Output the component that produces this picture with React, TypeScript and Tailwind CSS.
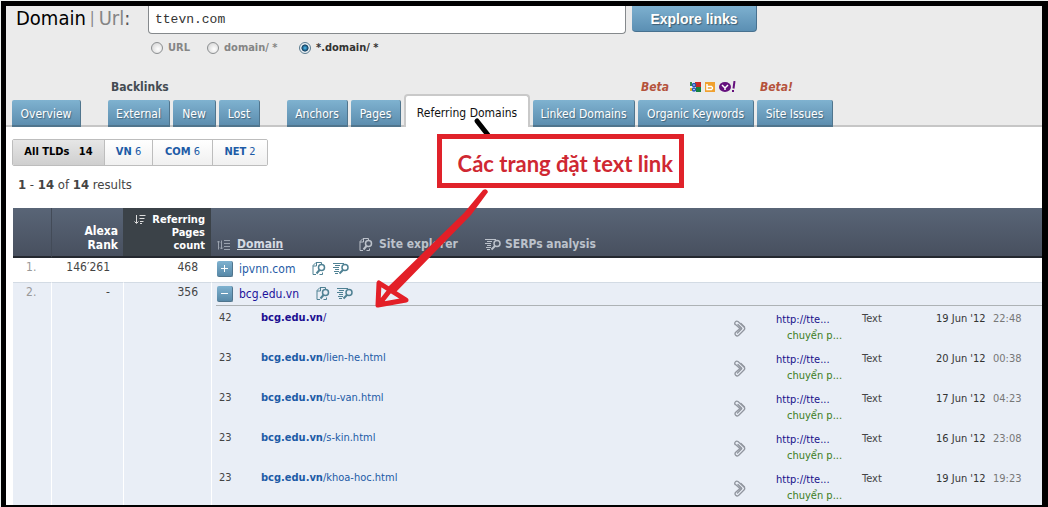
import type { ReactNode } from "react";

type Tab = { name: string; width: string; active?: boolean };

const pages = [
  { count: 42, path: "/", date: "19 Jun '12", time: "22:48", visited: true },
  { count: 23, path: "/lien-he.html", date: "20 Jun '12", time: "00:38" },
  { count: 23, path: "/tu-van.html", date: "17 Jun '12", time: "04:23" },
  { count: 23, path: "/s-kin.html", date: "16 Jun '12", time: "23:08" },
  { count: 23, path: "/khoa-hoc.html", date: "19 Jun '12", time: "19:23" },
];

const filters = [
  { tld: "VN", count: 6, width: "w-12" },
  { tld: "COM", count: 6, width: "w-[60px]" },
  { tld: "NET", count: 2, width: "w-[55px]" },
];

export default function App() {
  return (
    <div className="h-screen bg-[#eef2f1] pt-px pl-px font-['DejaVu_Sans_Condensed','DejaVu_Sans',sans-serif] text-[#333]">
      <div className="relative h-full overflow-hidden border-t-5 border-r-6 border-b-2 border-l-5 border-black bg-white">
        <SearchHeader />
        <Results />
        <Annotation />
      </div>
    </div>
  );
}

function SearchHeader() {
  return (
    <header className="border-b-2 border-[#c6c6c6] bg-[#ebebeb]">
      <form className="flex items-start" onSubmit={(e) => e.preventDefault()}>
        <label htmlFor="domain" className="flex w-[142px] items-center gap-1 pl-[10px] text-xl leading-6 text-black">
          Domain
          <span className="text-base leading-6 text-[#858585]">|</span>
          <span className="text-[#858585]">
            Url<span className="text-[#555]">:</span>
          </span>
        </label>
        <div>
          <div className="flex gap-1.5">
            <input
              id="domain"
              defaultValue="ttevn.com"
              className="h-7 w-[478px] rounded-b-sm border border-t-0 border-[#85898c] bg-white px-1.5 font-['Liberation_Mono',monospace] text-[13px] text-[#333]"
            />
            <button className="h-[26px] w-[125px] rounded-b-sm border-r border-b border-[#47718f] bg-linear-to-b from-[#7db0cf] to-[#5b8fb3] font-['Liberation_Sans',sans-serif] text-sm font-bold text-white text-shadow-[1px_1px_1px_#0006]">
              Explore links
            </button>
          </div>
          <div className="mt-1.5 flex h-4 items-center text-[11px] font-bold text-[#858585]">
            <Scope name="URL" className="w-14" />
            <Scope name="domain/ *" className="w-[92px]" />
            <Scope name="*.domain/ *" checked />
          </div>
        </div>
      </form>
      <nav className="-mb-0.5 flex items-end gap-[27px] pt-[23px] pl-1.5">
        <TabGroup tabs={[{ name: "Overview", width: "w-[69px]" }]} />
        <TabGroup
          label="Backlinks"
          tabs={[
            { name: "External", width: "w-[62px]" },
            { name: "New", width: "w-[43px]" },
            { name: "Lost", width: "w-[41px]" },
          ]}
        />
        <div className="flex items-end gap-[3px]">
          <TabGroup
            tabs={[
              { name: "Anchors", width: "w-[61px]" },
              { name: "Pages", width: "w-[50px]" },
              { name: "Referring Domains", width: "w-[126px]", active: true },
              { name: "Linked Domains", width: "w-[102px]" },
            ]}
          />
          <TabGroup
            label={
              <span className="flex items-center text-[#b5533c] italic">
                <span className="w-[49px]">Beta</span>
                <EngineLogos />
              </span>
            }
            tabs={[{ name: "Organic Keywords", width: "w-[116px]" }]}
          />
          <TabGroup
            label={<span className="text-[#b5533c] italic">Beta!</span>}
            tabs={[{ name: "Site Issues", width: "w-[76px]" }]}
          />
        </div>
      </nav>
    </header>
  );
}

function Scope({ name, checked, className = "" }: { name: string; checked?: boolean; className?: string }) {
  return (
    <label className={`flex items-center gap-[5px] pl-[3px] whitespace-nowrap ${checked ? "text-[#333]" : ""} ${className}`}>
      <input
        type="radio"
        name="scope"
        defaultChecked={checked}
        className="size-3 appearance-none rounded-full border border-[#8c8f91] bg-[radial-gradient(circle_at_60%_60%,#fff,#cfcfcf)] checked:border-[#5b7c90] checked:bg-[radial-gradient(circle,#3fa5d8_10%,#123c5c_45%,#e8eef2_55%)]"
      />
      {name}
    </label>
  );
}

function TabGroup({ label, tabs }: { label?: ReactNode; tabs: Tab[] }) {
  return (
    <div>
      {label && <div className="mb-[5px] pl-[3px] text-xs leading-4 font-bold text-[#444b52]">{label}</div>}
      <div className="flex items-end gap-[3px]">
        {tabs.map((tab) => (
          <a
            key={tab.name}
            href="#"
            className={
              tab.active
                ? `${tab.width} h-[33px] rounded-t-sm border-2 border-b-0 border-[#c9c9c9] bg-white pt-2 text-center text-xs leading-[18px] whitespace-nowrap text-[#111]`
                : `${tab.width} h-[27px] rounded-t-xs border-r border-b-2 border-[#50758d] bg-linear-to-b from-[#7fb2d0] to-[#5d8eaf] pt-[5px] text-center text-xs leading-[18px] whitespace-nowrap text-white text-shadow-[1px_1px_1px_#0005]`
            }
          >
            {tab.name}
          </a>
        ))}
      </div>
    </div>
  );
}

function Results() {
  return (
    <main>
      <div className="mt-3 ml-1.5 flex h-[27px] w-fit overflow-hidden rounded-xs border border-[#bdbdbd] text-xs">
        <button className="w-[91px] bg-linear-to-b from-[#e6e6e6] to-[#cfcfcf] text-[11px] font-bold text-black">
          All TLDs <span className="ml-1.5">14</span>
        </button>
        {filters.map((f) => (
          <button
            key={f.tld}
            className={`${f.width} border-l border-[#bdbdbd] bg-linear-to-b from-white to-[#f0f0f0] text-[11px] text-[#1d5ba6]`}
          >
            <b>{f.tld}</b> {f.count}
          </button>
        ))}
      </div>
      <p className="mt-2.5 mb-3.5 pl-3 text-[13px] leading-[18px] text-[#444]">
        <b>1</b> - <b>14</b> of <b>14</b> results
      </p>
      <div className="pl-[7px]">
        <table className="w-full table-fixed border-separate border-spacing-0 text-xs">
          <colgroup>
            <col className="w-[38px]" />
            <col className="w-[72px]" />
            <col className="w-[88px]" />
            <col />
          </colgroup>
          <thead>
            <tr className="h-[50px] bg-linear-to-b from-[#596577] to-[#474f5e] text-white [&>th]:border-b-2 [&>th]:border-b-[#24282f] [&>th]:align-bottom">
              <th />
              <th className="border-l border-l-[#434b58] pr-[5px] pb-1 text-right leading-[14px]">
                Alexa
                <br />
                Rank
              </th>
              <th className="bg-[#3b4248] pr-1.5 pb-1 text-right text-[11px] leading-[13px]">
                <SortIcon className="mr-1.5 inline-block text-[#ddd]" />
                Referring
                <br />
                Pages
                <br />
                count
              </th>
              <th className="pb-1 pl-1.5 text-left leading-[15px] text-[#bcc2cb]">
                <span className="flex items-center">
                  <SortBothIcon />
                  <a href="#" className="ml-[7px] w-[122px] text-[#d5dae2] underline">
                    Domain
                  </a>
                  <ExplorerIcon />
                  <span className="ml-1.5 w-[106px]">Site explorer</span>
                  <SerpIcon />
                  <span className="ml-1">SERPs analysis</span>
                </span>
              </th>
            </tr>
          </thead>
          <tbody className="[&>tr>td]:align-top">
            <tr className="h-6">
              <RankCells index={1} alexa="146′261" count={468} />
              <td className="pt-[3px] pl-1.5">
                <DomainLine name="ipvnn.com" />
              </td>
            </tr>
            <tr className="bg-[#e9eef6] [&>td]:border-t [&>td]:border-t-[#d3dbe4]">
              <RankCells index={2} alexa="-" count={356} />
              <td className="border-l border-l-white pl-1">
                <div className="h-[23px] border-b border-[#adb2b5] pt-[3px] pl-px">
                  <DomainLine name="bcg.edu.vn" open />
                </div>
                <PageTable />
              </td>
            </tr>
          </tbody>
        </table>
      </div>
    </main>
  );
}

function RankCells({ index, alexa, count }: { index: number; alexa: string; count: number }) {
  return (
    <>
      <td className="pl-[13px] leading-[18px] text-[#999]">{index}.</td>
      <td className="border-l border-l-white pr-[13px] text-right leading-[18px] text-[#444]">{alexa}</td>
      <td className="border-l border-l-white pr-[13px] text-right leading-[18px] text-[#444]">{count}</td>
    </>
  );
}

function DomainLine({ name, open }: { name: string; open?: boolean }) {
  return (
    <div className="flex items-center text-[#4f8193]">
      <button
        aria-label={open ? "Collapse" : "Expand"}
        className="flex size-4 items-center justify-center rounded-xs border-r border-b border-[#50758d] bg-linear-to-b from-[#7fb2d0] to-[#5889a8] text-white"
      >
        <svg width="8" height="8" viewBox="0 0 8 8" stroke="currentColor">
          <path d={open ? "M0 3.5h7" : "M0 3.5h7M3.5 0v7"} />
        </svg>
      </button>
      <a href="#" className={`ml-1.5 leading-4 ${open ? "text-[#1c129b]" : "text-[#1d5ba6]"}`}>
        {name}
      </a>
      <ExplorerIcon className="ml-[17px]" />
      <SerpIcon className="ml-[7px]" />
    </div>
  );
}

function PageTable() {
  return (
    <table className="w-full table-fixed text-[11px] leading-[14px]">
      <colgroup>
        <col className="w-[45px]" />
        <col />
        <col className="w-[42px]" />
        <col className="w-[86px]" />
        <col className="w-[74px]" />
        <col className="w-[57px]" />
        <col className="w-[49px]" />
      </colgroup>
      <tbody className="[&>tr>td]:align-top">
        {pages.map((page) => (
          <tr key={page.path} className="h-10">
            <td className="pt-[5px] pl-[3px] text-[#444]">{page.count}</td>
            <td className="pt-[5px]">
              <a href="#" className={page.visited ? "text-[#1c0f91]" : "text-[#1d5ba6]"}>
                <b>bcg.edu.vn</b>
                {page.path}
              </a>
            </td>
            <td className="pt-3.5">
              <ClipIcon />
            </td>
            <td className="pt-1.5 leading-4">
              <a href="#" className="block text-[#16108a]">
                http://tte...
              </a>
              <span className="block pl-[11px] text-[#3c7d22]">chuyển p...</span>
            </td>
            <td className="pt-1.5 text-[#444]">Text</td>
            <td className="pt-1.5 whitespace-nowrap text-[#333]">{page.date}</td>
            <td className="pt-1.5 text-[#777]">{page.time}</td>
          </tr>
        ))}
      </tbody>
    </table>
  );
}

/* Hand-drawn callout laid over the report */
function Annotation() {
  return (
    <div className="pointer-events-none absolute top-0 left-0">
      <svg width="700" height="310" viewBox="6 6 700 310">
        <path d="M477 121l11 14" stroke="#000" strokeWidth="5" strokeLinecap="round" />
        <path d="M483 190Q487 188 488 192L471 215L395 293L388 287L464 213Z" fill="#e31f27" />
        <path
          d="M379 283L378 305L406 300ZM391 289L380 303"
          fill="none"
          stroke="#e31f27"
          strokeWidth="5"
          strokeLinejoin="round"
        />
      </svg>
      <div className="absolute top-32 left-[431px] flex h-[54px] w-[247px] items-center justify-end border-5 border-[#e0222a] pt-1 pr-1.5 font-['Lato','Noto_Sans',sans-serif] text-[22px] font-bold whitespace-nowrap text-[#cf2832]">
        Các trang đặt text link
      </div>
    </div>
  );
}

function SortIcon({ className = "" }: { className?: string }) {
  return (
    <svg width="12" height="10" viewBox="0 0 12 10" fill="none" stroke="currentColor" className={className}>
      <path d="M2.5 0v8M.5 6.5l2 2 2-2M5.5 .5h6M5.5 3.5h5M6 6.5h3.5M6 8.5h2" />
    </svg>
  );
}

function SortBothIcon() {
  return (
    <svg width="13" height="10" viewBox="0 0 13 10" fill="none" stroke="#9aa2ae">
      <path d="M1.500 9.500V1M0 2.500l1.500-1.500L3 2.500M4.500 .5V9M3 7.500L4.500 9L6 7.500M7 .5h6M7 3.500h6M7 6.500h6M7 9.500h6" />
    </svg>
  );
}

function ExplorerIcon({ className = "" }: { className?: string }) {
  return (
    <svg width="14" height="14" viewBox="0 0 14 14" fill="none" stroke="currentColor" className={className}>
      <path d="M9.500 2.500V.5H4L1 3.500V12.500H4M4.500 .5V4H1" />
      <circle cx="9.500" cy="5.500" r="3" strokeWidth="1.500" />
      <path d="M7.500 8L4.500 11.500" strokeWidth="2" />
      <path d="M7.500 12.500H10.500V10.500" />
    </svg>
  );
}

function SerpIcon({ className = "" }: { className?: string }) {
  return (
    <svg width="16" height="14" viewBox="0 0 16 14" fill="none" stroke="currentColor" className={className}>
      <path d="M0 1.500h11M2 3.500h5M0 5.500h6M2 7.500h4M1 9.500h5M2 11.500h3" />
      <circle cx="12" cy="5.500" r="3" strokeWidth="1.500" />
      <path d="M10 8L6.500 11.500" strokeWidth="2" />
    </svg>
  );
}

function ClipIcon() {
  return (
    <svg width="12" height="17" viewBox="0 0 12 17" fill="none" stroke="#90959e" strokeWidth="1.300" strokeLinecap="round" className="block">
      <path d="M1 4.500C0 2.500 2 .5 4 1.500L10 7Q11.500 8.500 10 10L4.500 15.500C2.500 17 0 14.500 1.500 12.500L6 8.500L1.500 4.500M4 4.500L7.500 8Q8 8.500 7.500 9L3.500 13" />
      <path d="M7 3.500l3.500 3.500" />
    </svg>
  );
}

function EngineLogos() {
  return (
    <svg width="46" height="12" viewBox="0 0 46 12">
      <rect y="1" width="6" height="10" fill="#f2f5fb" />
      <rect x="5" y="1" width="6" height="5" fill="#c92a24" />
      <rect x="6" y="6" width="5" height="5" fill="#178342" />
      <rect y="1" width="2" height="4" fill="#2f8a4d" />
      <rect y="7" width="2" height="3" fill="#e8b32c" />
      <circle cx="4" cy="4" r="1.500" fill="#fff" stroke="#2457b5" strokeWidth="1.500" />
      <circle cx="4" cy="8.500" r="1.500" fill="#fff" stroke="#2457b5" strokeWidth="1.500" />
      <rect x="15" y="1" width="10" height="10" fill="#f0a12f" />
      <path d="M17 3v5.500h4.500q2-1.500 0-3H17" fill="none" stroke="#fff" strokeWidth="1.500" />
      <ellipse cx="35" cy="6" rx="6" ry="5" fill="#65107d" />
      <path d="M32 4l3 3 3-3M35 7v2" fill="none" stroke="#fff" strokeWidth="1.500" />
      <path d="M44.500 0l-1 7.500M43 9v2" stroke="#65107d" strokeWidth="2" />
    </svg>
  );
}
